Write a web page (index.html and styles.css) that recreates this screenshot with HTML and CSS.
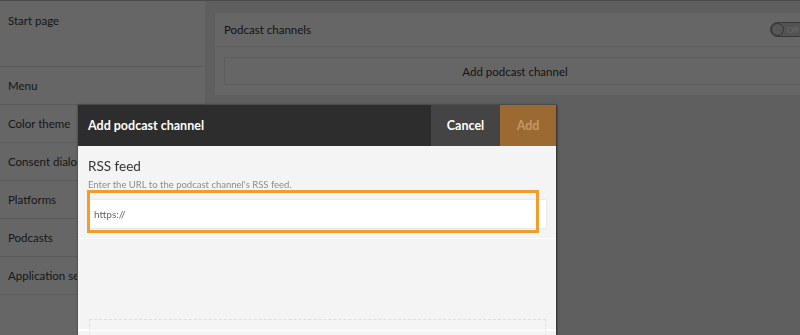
FILE: index.html
```html
<!DOCTYPE html>
<html lang="en">
<head>
    <meta charset="UTF-8">
    <meta name="viewport" content="width=device-width, initial-scale=1.0">
    <title>Podcasts - Settings</title>
    <link rel="stylesheet" href="styles.css">
</head>
<body>
    <div class="app">
        <div class="sidebar">
            <a class="nav-item nav-start" href="#">Start page</a>
            <a class="nav-item" href="#">Menu</a>
            <a class="nav-item" href="#">Color theme</a>
            <a class="nav-item" href="#">Consent dialog</a>
            <a class="nav-item" href="#">Platforms</a>
            <a class="nav-item" href="#">Podcasts</a>
            <a class="nav-item" href="#">Application settings</a>
        </div>
        <div class="main">
            <div class="card">
                <div class="card-head">
                    <span>Podcast channels</span>
                    <div class="toggle"><span class="knob"></span><span class="toggle-text">Off</span></div>
                </div>
                <div class="card-body">
                    <button class="add-channel">Add podcast channel</button>
                </div>
            </div>
        </div>
    </div>

    <div class="overlay"></div>

    <div class="modal">
        <div class="modal-head">
            <h2>Add podcast channel</h2>
            <button class="btn btn-cancel">Cancel</button>
            <button class="btn btn-add" disabled>Add</button>
        </div>
        <div class="modal-section field">
            <label for="rss">RSS feed</label>
            <div class="help">Enter the URL to the podcast channel's RSS feed.</div>
            <input id="rss" type="text" placeholder="https://">
            <div class="focus-ring"></div>
        </div>
        <div class="modal-section preview-section">
            <div class="preview"></div>
        </div>
        <div class="modal-section"></div>
    </div>
</body>
</html>
```

FILE: styles.css
```css
body {
    margin: 0;
    font-family: Lato, "Open Sans", sans-serif;
    background: #eeeeee;
    height: 335px;
    overflow: hidden;
}

.app {
    display: flex;
    border-top: 1px solid #b8b8b8;
    height: 334px;
}

.sidebar {
    width: 205px;
    background: #ffffff;
    display: flex;
    flex-direction: column;
}
.nav-item {
    display: block;
    height: 38px;
    line-height: 37px;
    padding-left: 8px;
    border-bottom: 1px solid #e0e0e0;
    color: #3c3c3c;
    font-size: 11.5px;
    text-decoration: none;
    white-space: nowrap;
    box-sizing: border-box;
}
.nav-start {
    height: 66px;
    line-height: 40px;
}

.main {
    flex: 1;
    padding: 12px 0 0 10px;
    overflow: hidden;
}
.card {
    background: #ffffff;
    margin-right: -15px;
    border-radius: 2px;
}
.card-head {
    height: 33px;
    display: flex;
    align-items: center;
    justify-content: space-between;
    padding: 0 7px 0 9px;
    border-bottom: 1px solid #ececec;
    font-size: 11.5px;
    color: #333;
}
.toggle {
    width: 38px;
    height: 15px;
    border: 1px solid #8a8a8a;
    border-radius: 9px;
    background: #cfcfcf;
    display: flex;
    align-items: center;
    box-sizing: border-box;
}
.knob {
    width: 13px;
    height: 13px;
    border-radius: 50%;
    background: #dadada;
    border: 1px solid #7c7c7c;
    box-sizing: border-box;
}
.toggle-text {
    color: #fff;
    font-size: 8px;
    margin-left: 3px;
}
.card-body {
    padding: 10px 9px 10px 9px;
}
.add-channel {
    display: block;
    width: 100%;
    height: 28px;
    background: #ffffff;
    border: 1px solid #e8e8e8;
    font-family: inherit;
    font-size: 11.5px;
    color: #333;
}

.overlay {
    position: fixed;
    inset: 0;
    background: rgba(0, 0, 0, 0.6);
}

.modal {
    position: absolute;
    left: 77px;
    top: 105px;
    width: 478px;
    height: 230px;
    overflow: hidden;
    background: #f4f4f4;
    border-left: 1px solid #555;
    box-shadow: 1px 0 2px rgba(0, 0, 0, 0.6);
}
.modal-head {
    height: 41px;
    display: flex;
    background: #2d2d2d;
}
.modal-head h2 {
    flex: 1;
    margin: 0;
    padding-left: 10px;
    line-height: 41px;
    font-size: 12.5px;
    font-weight: 700;
    color: #ffffff;
}
.btn {
    border: none;
    font-family: inherit;
    font-size: 12.5px;
    font-weight: 700;
    height: 41px;
}
.btn-cancel {
    width: 69px;
    background: #444444;
    color: #ffffff;
}
.btn-add {
    width: 56px;
    background: #9b6a33;
    color: #c09868;
}

.modal-section {
    border-bottom: 1px solid #ffffff;
}
.field {
    position: relative;
    padding: 12px 11px 9px 10px;
}
.field label {
    display: block;
    font-size: 13.5px;
    color: #333;
    line-height: 17px;
}
.help {
    font-size: 9.5px;
    color: #8c8c8c;
    line-height: 12px;
    margin-top: 4px;
}
.field input {
    display: block;
    box-sizing: border-box;
    width: calc(100% + 1px);
    height: 30px;
    margin: 8px 0 0 1px;
    border: 1px solid #eaeaea;
    background: #ffffff;
    padding: 0 4px;
    font-family: inherit;
    font-size: 10px;
    outline: none;
}
.field input::placeholder {
    color: #666;
}
.focus-ring {
    position: absolute;
    left: 9px;
    top: 44px;
    width: 452px;
    height: 43px;
    border: 3px solid #f39c2c;
    box-sizing: border-box;
    pointer-events: none;
}

.preview-section {
    height: 91px;
    padding: 80px 10px 0 11px;
    box-sizing: border-box;
}
.preview {
    height: 40px;
    border: 1px dashed #efd3ef;
    background: #f5f5f5;
}
```
